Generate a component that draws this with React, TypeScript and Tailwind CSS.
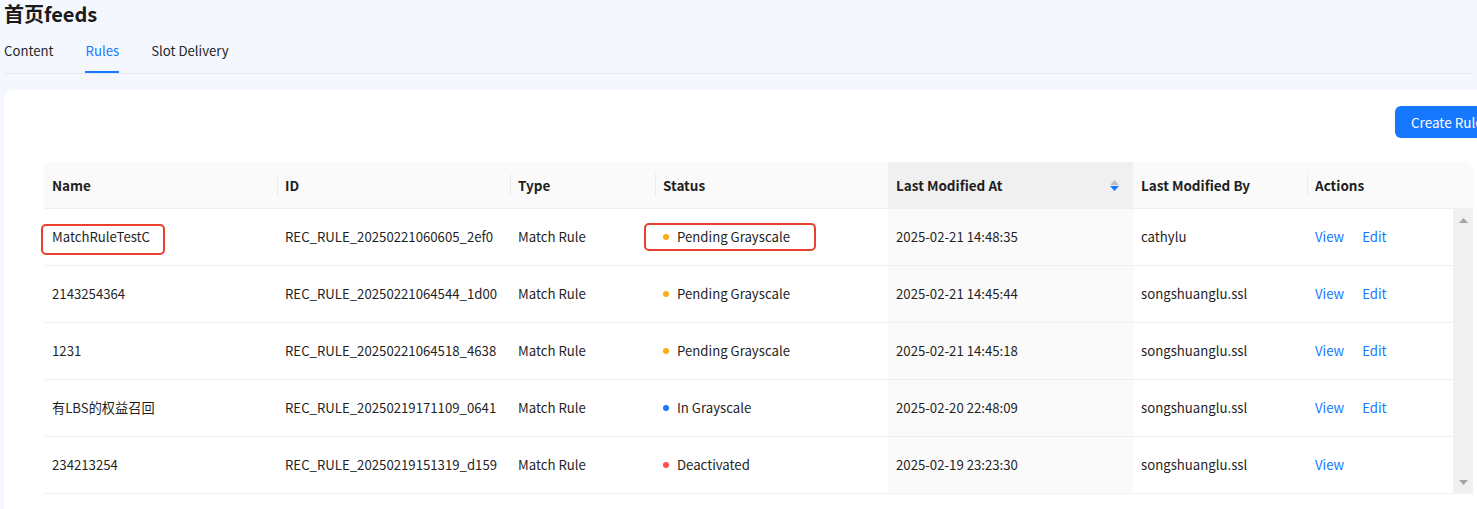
type Status = 'pending' | 'gray' | 'off';

interface RuleRow {
  name: string;
  id: string;
  type: string;
  status: Status;
  modifiedAt: string;
  modifiedBy: string;
  editable: boolean;
}

const rows: RuleRow[] = [
  { name: 'MatchRuleTestC', id: 'REC_RULE_20250221060605_2ef0', type: 'Match Rule', status: 'pending', modifiedAt: '2025-02-21 14:48:35', modifiedBy: 'cathylu', editable: true },
  { name: '2143254364', id: 'REC_RULE_20250221064544_1d00', type: 'Match Rule', status: 'pending', modifiedAt: '2025-02-21 14:45:44', modifiedBy: 'songshuanglu.ssl', editable: true },
  { name: '1231', id: 'REC_RULE_20250221064518_4638', type: 'Match Rule', status: 'pending', modifiedAt: '2025-02-21 14:45:18', modifiedBy: 'songshuanglu.ssl', editable: true },
  { name: '有LBS的权益召回', id: 'REC_RULE_20250219171109_0641', type: 'Match Rule', status: 'gray', modifiedAt: '2025-02-20 22:48:09', modifiedBy: 'songshuanglu.ssl', editable: true },
  { name: '234213254', id: 'REC_RULE_20250219151319_d159', type: 'Match Rule', status: 'off', modifiedAt: '2025-02-19 23:23:30', modifiedBy: 'songshuanglu.ssl', editable: false },
];

const statusMeta: Record<Status, { label: string; dot: string }> = {
  pending: { label: 'Pending Grayscale', dot: 'bg-[#faad14]' },
  gray: { label: 'In Grayscale', dot: 'bg-[#1677ff]' },
  off: { label: 'Deactivated', dot: 'bg-[#ff4d4f]' },
};

// body columns; header uses the same widths with the scrollbar added to Actions
const bodyCols = 'grid grid-cols-[233px_233px_145px_233px_245px_174px_146px]';
const headCols = 'grid grid-cols-[233px_233px_145px_233px_245px_174px_166px]';

function HeaderCell({ label, divider = true, sorted = false }: { label: string; divider?: boolean; sorted?: boolean }) {
  return (
    <div className={`relative flex h-[46px] items-center px-2 font-semibold ${sorted ? 'bg-[#f0f0f0]' : ''}`}>
      {divider && <span className="absolute left-0 top-1/2 h-[22px] w-px -translate-y-1/2 bg-[#ebebeb]" />}
      <span className="flex-1">{label}</span>
      {sorted && (
        <span className="mr-[6px] flex flex-col items-center gap-[1px]">
          <svg width="9" height="5" viewBox="0 0 9 5"><path d="M4.5 0 9 5H0z" fill="#bfbfbf" /></svg>
          <svg width="9" height="5" viewBox="0 0 9 5"><path d="M0 0h9L4.5 5z" fill="#1677ff" /></svg>
        </span>
      )}
    </div>
  );
}

export default function App() {
  return (
    <div
      className="h-[509px] w-full overflow-hidden bg-[#f4f7fd] text-[13.2px] text-[#1f1f1f]"
      style={{ fontFamily: '"Noto Sans CJK SC", "Noto Sans", sans-serif' }}
    >
      <div className="px-1">
        <h1 className="h-[27px] text-[20px] font-bold leading-[27px] text-[#1a1a1a]">首页feeds</h1>
        <div className="flex gap-8 border-b border-[#e6e9ef]">
          {['Content', 'Rules', 'Slot Delivery'].map((t) => (
            <div key={t} className={`relative pb-[11px] pt-[13px] leading-[22px] ${t === 'Rules' ? 'text-[#1677ff]' : 'text-[#262626]'}`}>
              {t}
              {t === 'Rules' && <span className="absolute bottom-0 left-[-1px] right-0 h-[2px] bg-[#1677ff]" />}
            </div>
          ))}
        </div>
      </div>

      <div className="ml-1 mt-4 w-[1541px] rounded-lg bg-white px-10 pb-10 pt-4">
        <div className="flex justify-end">
          <button className="h-8 w-[110px] rounded-md bg-[#1677ff] px-4 text-left text-[13.5px] text-white">Create Rule</button>
        </div>

        <div className="mt-6 w-[1429px]">
          <div className={`${headCols} rounded-t-lg border-b border-[#f0f0f0] bg-[#fafafa] text-[13.5px]`}>
            <HeaderCell label="Name" divider={false} />
            <HeaderCell label="ID" />
            <HeaderCell label="Type" />
            <HeaderCell label="Status" />
            <HeaderCell label="Last Modified At" divider={false} sorted />
            <HeaderCell label="Last Modified By" divider={false} />
            <HeaderCell label="Actions" />
          </div>

          <div className="flex">
            <div className="w-[1409px]">
              {rows.map((r, i) => (
                <div key={r.id} className={`${bodyCols} h-[57px] border-b border-[#f0f0f0]`}>
                  <div className="relative flex items-center px-2">
                    {r.name}
                    {i === 0 && <span className="absolute left-[-3px] top-[15px] h-[31px] w-[124px] rounded-[5px] border-2 border-[#e8402d]" />}
                  </div>
                  <div className="flex items-center px-2">{r.id}</div>
                  <div className="flex items-center px-2">{r.type}</div>
                  <div className="relative flex items-center px-2">
                    <span className={`mr-[8px] h-[6px] w-[6px] rounded-full ${statusMeta[r.status].dot}`} />
                    <span>{statusMeta[r.status].label}</span>
                    {i === 0 && <span className="absolute left-[-11px] top-[14px] h-[28px] w-[172px] rounded-[5px] border-2 border-[#e8402d]" />}
                  </div>
                  <div className="flex items-center bg-[#fafafa] px-2">{r.modifiedAt}</div>
                  <div className="flex items-center px-2">{r.modifiedBy}</div>
                  <div className="flex items-center gap-[18px] px-2 text-[#1677ff]">
                    <span>View</span>
                    {r.editable && <span>Edit</span>}
                  </div>
                </div>
              ))}
            </div>
            <div className="flex h-[285px] w-5 flex-col items-center justify-between bg-[#f0f0f0] py-[9px]">
              <svg width="9" height="5" viewBox="0 0 9 5"><path d="M4.5 0 9 5H0z" fill="#a3a3a3" /></svg>
              <svg width="9" height="5" viewBox="0 0 9 5"><path d="M0 0h9L4.5 5z" fill="#a3a3a3" /></svg>
            </div>
          </div>
        </div>
      </div>
    </div>
  );
}
